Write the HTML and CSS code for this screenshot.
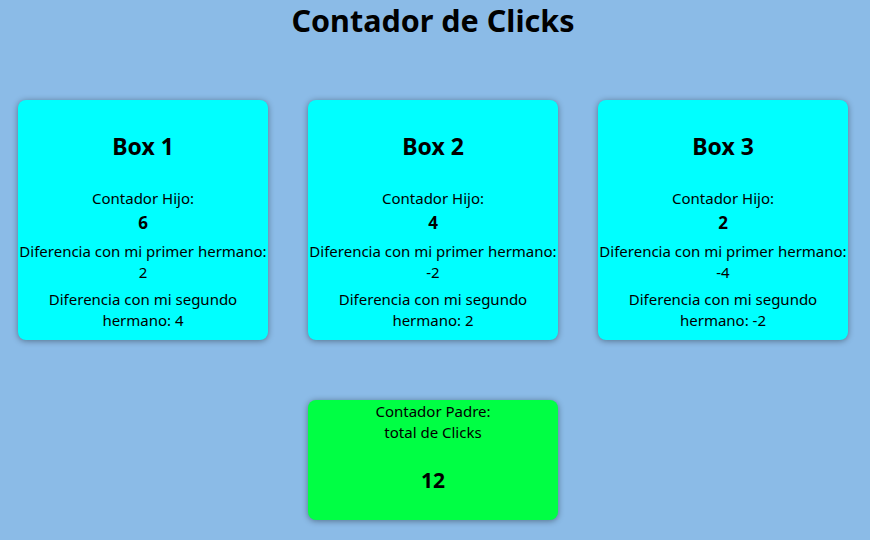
FILE: index.html
```html
<!DOCTYPE html>
<html lang="es">
<head>
<meta charset="utf-8">
<title>Contador de Clicks</title>
<link rel="stylesheet" href="styles.css">
</head>
<body>
<div class="page">
  <h1 class="title">Contador de Clicks</h1>
  <div class="row">
    <div class="card child">
      <h2 class="card-title">Box 1</h2>
      <p class="label">Contador Hijo:</p>
      <p class="count">6</p>
      <p class="diff">Diferencia con mi primer hermano: 2</p>
      <p class="diff">Diferencia con mi segundo hermano: 4</p>
    </div>
    <div class="card child">
      <h2 class="card-title">Box 2</h2>
      <p class="label">Contador Hijo:</p>
      <p class="count">4</p>
      <p class="diff">Diferencia con mi primer hermano: -2</p>
      <p class="diff">Diferencia con mi segundo hermano: 2</p>
    </div>
    <div class="card child">
      <h2 class="card-title">Box 3</h2>
      <p class="label">Contador Hijo:</p>
      <p class="count">2</p>
      <p class="diff">Diferencia con mi primer hermano: -4</p>
      <p class="diff">Diferencia con mi segundo hermano: -2</p>
    </div>
  </div>
  <div class="parent-row">
    <div class="card parent">
      <p class="label">Contador Padre:<br>total de Clicks</p>
      <p class="total">12</p>
    </div>
  </div>
</div>
</body>
</html>
```
FILE: styles.css
```css
html, body {
  margin: 0;
  padding: 0;
  background: #8bbbe7;
  font-family: "Noto Sans", "Open Sans", sans-serif;
  color: #000;
}

.page {
  width: 830px;
  margin-left: 18px;
  padding-bottom: 20px;
  display: flex;
  flex-direction: column;
  align-items: center;
}

.title {
  margin: 0;
  font-size: 30.5px;
  line-height: 40px;
  font-weight: 700;
}

.row {
  margin-top: 60px;
  display: flex;
  gap: 40px;
}

.card {
  width: 250px;
  border-radius: 8px;
  box-shadow: 0 1px 6px rgba(0, 0, 0, 0.4);
  display: flex;
  flex-direction: column;
  align-items: center;
  text-align: center;
}

.child {
  height: 240px;
  background: #00ffff;
}

.card p {
  margin: 0;
  font-size: 15px;
  line-height: 21px;
}

.card-title {
  margin: 34px 0 0;
  font-size: 23px;
  line-height: 24px;
  font-weight: 700;
}

.child .label {
  margin-top: 30px;
}

.card .count {
  font-size: 17px;
  font-weight: 700;
  line-height: 24px;
  padding-top: 2px;
}

.card .diff {
  margin-top: 6px;
}

.parent-row {
  margin-top: 60px;
  display: flex;
}

.parent {
  height: 120px;
  background: #00ff44;
}

.parent .label {
  margin-top: 1px;
}

.card .total {
  margin-top: 24px;
  font-size: 21px;
  font-weight: 700;
  line-height: 26px;
}
```
